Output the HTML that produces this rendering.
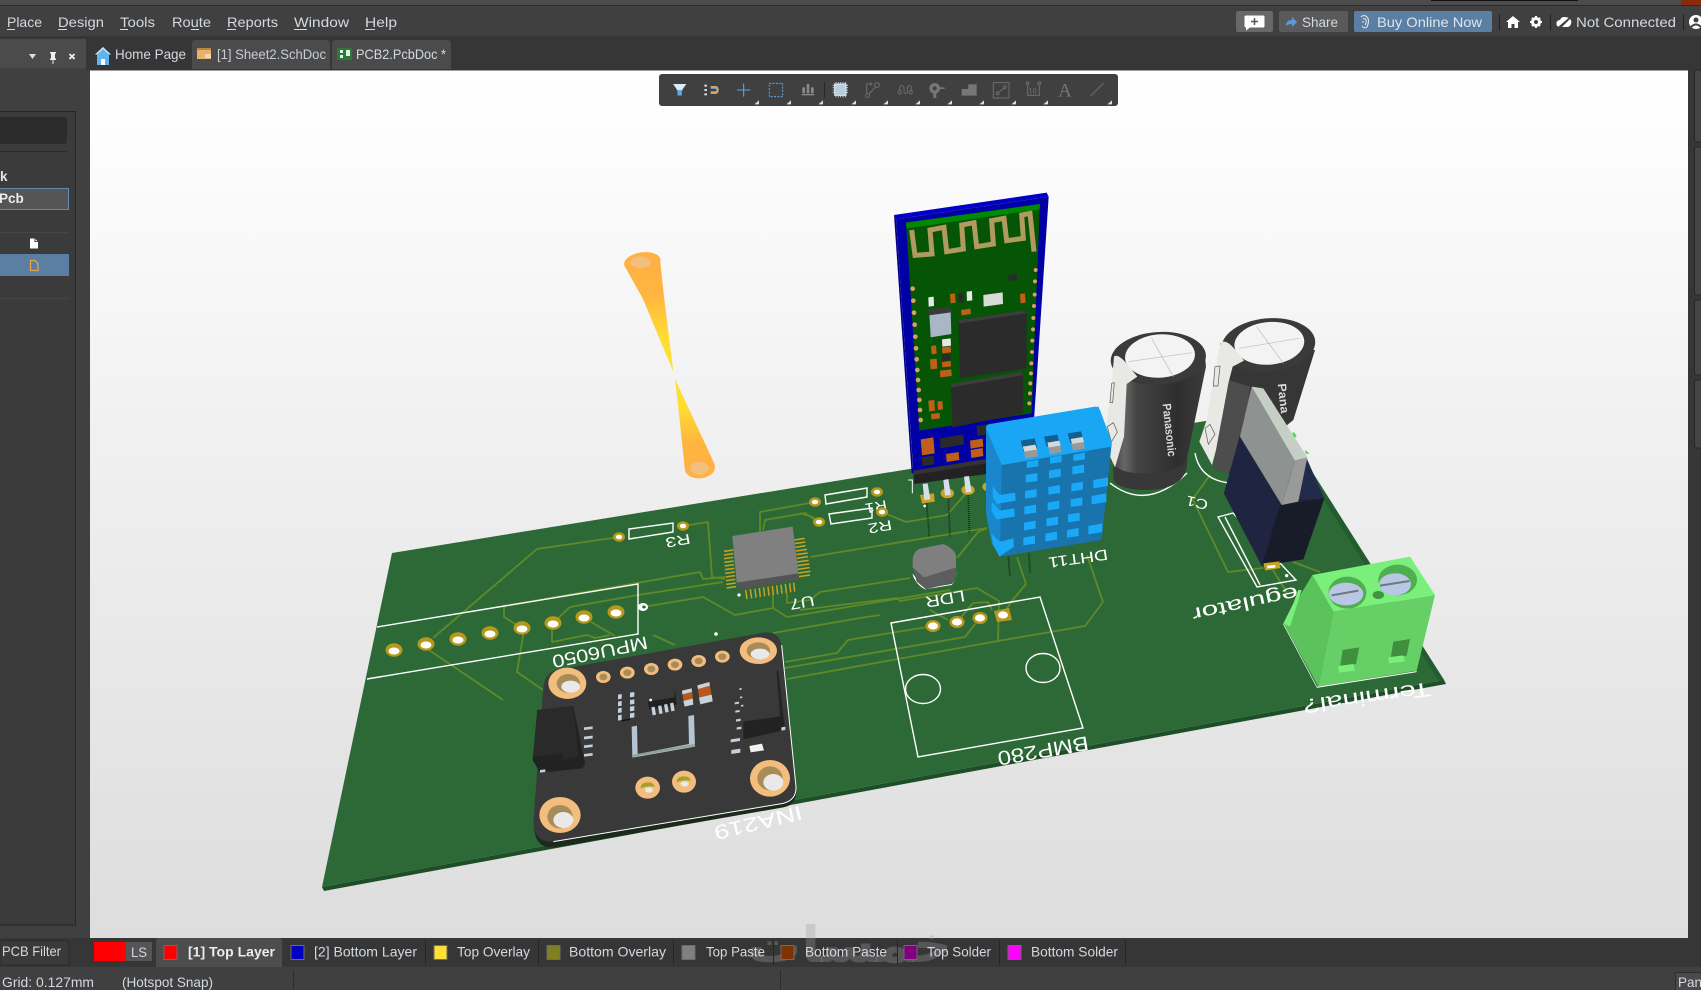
<!DOCTYPE html>
<html><head><meta charset="utf-8"><title>PCB2.PcbDoc</title>
<style>
html,body{margin:0;padding:0;width:1701px;height:990px;overflow:hidden;background:#3a3a3a}
svg{display:block}
text{font-family:"Liberation Sans",sans-serif}
.m{font-size:14px;fill:#d3d9e0}
.s{font-family:"Liberation Sans",sans-serif;fill:#fff}
.t{fill:none;stroke:#5f8a28;stroke-width:1.8;stroke-linejoin:round}
.w{fill:none;stroke:#fff;stroke-width:1.4}
</style></head><body>
<svg width="1701" height="990" viewBox="0 0 1701 990" xmlns="http://www.w3.org/2000/svg">
<defs>
<linearGradient id="bg" x1="0" y1="0" x2="0" y2="1"><stop offset="0" stop-color="#fff"/><stop offset=".05" stop-color="#fefefe"/><stop offset=".4" stop-color="#f1f1f1"/><stop offset="1" stop-color="#dddddd"/></linearGradient>
<linearGradient id="cone1" x1="0" y1="0" x2="0" y2="1"><stop offset="0" stop-color="#ffb145"/><stop offset=".32" stop-color="#ffb540"/><stop offset=".7" stop-color="#ffdd33"/><stop offset="1" stop-color="#ffe033"/></linearGradient>
<linearGradient id="cone2" x1="0" y1="1" x2="0" y2="0"><stop offset="0" stop-color="#ffb145"/><stop offset=".3" stop-color="#ffb540"/><stop offset=".7" stop-color="#ffdd33"/><stop offset="1" stop-color="#ffe033"/></linearGradient>
<linearGradient id="capb" x1="0" y1="0" x2="1" y2="0"><stop offset="0" stop-color="#3a3a3a"/><stop offset=".15" stop-color="#666"/><stop offset=".28" stop-color="#444"/><stop offset=".7" stop-color="#2e2e2e"/><stop offset="1" stop-color="#3c3c3c"/></linearGradient>
</defs>

<!-- chrome -->
<rect width="1701" height="990" fill="#3d3d3d"/>
<rect width="1701" height="5" fill="#4c4c4c"/>
<rect y="5" width="1701" height="1" fill="#2a2a2a"/>
<rect x="1431" y="0" width="147" height="1" fill="#111"/>
<rect x="1681" y="0" width="20" height="5" fill="#8a2a0a"/>
<rect y="6" width="1701" height="30" fill="#404040"/>
<rect y="36" width="1701" height="34" fill="#363636"/>

<text class="m" x="7" y="27" lengthAdjust="spacingAndGlyphs" textLength="35">Place</text>
<text class="m" x="58" y="27" lengthAdjust="spacingAndGlyphs" textLength="46">Design</text>
<text class="m" x="120" y="27" lengthAdjust="spacingAndGlyphs" textLength="35">Tools</text>
<text class="m" x="172" y="27" lengthAdjust="spacingAndGlyphs" textLength="39">Route</text>
<text class="m" x="227" y="27" lengthAdjust="spacingAndGlyphs" textLength="51">Reports</text>
<text class="m" x="294" y="27" lengthAdjust="spacingAndGlyphs" textLength="55">Window</text>
<text class="m" x="365" y="27" lengthAdjust="spacingAndGlyphs" textLength="32">Help</text>
<g stroke="#d3d9e0" stroke-width="1">
<path d="M7 29.500h8M58 29.500h9M120 29.500h8M191 29.500h8M227 29.500h9M294 29.500h13M365 29.500h10"/>
</g>

<!-- top right -->
<rect x="1236" y="11" width="37" height="21" rx="2" fill="#686868"/>
<path d="M1246 15.500h17a1.500 1.500 0 0 1 1.500 1.500v9a1.500 1.500 0 0 1-1.500 1.500h-13l-4 3v-3a1.500 1.500 0 0 1-1.500-1.500v-9a1.500 1.500 0 0 1 1.500-1.500z" fill="#fff"/>
<path d="M1254.500 18v7M1251 21.500h7" stroke="#555" stroke-width="1.500"/>
<rect x="1279" y="11" width="69" height="21" rx="2" fill="#5a5a5a"/>
<path d="M1286 26q0-6 6-6v-3l5 5-5 5v-3q-4 0-6 2z" fill="#5b9ad5"/>
<text class="m" x="1302" y="27" lengthAdjust="spacingAndGlyphs" textLength="36">Share</text>
<rect x="1354" y="11" width="138" height="21" rx="2" fill="#5b7fa3"/>
<path d="M1361 17q3-3 6 0t0 10q-3 2-5-1M1363 19q2-1 3 1t-1 5M1362 22h2" stroke="#e4ebf2" fill="none" stroke-width="1"/>
<text class="m" x="1377" y="27" lengthAdjust="spacingAndGlyphs" textLength="105" style="fill:#dbe5ef">Buy Online Now</text>
<rect x="1499" y="14" width="1" height="16" fill="#222"/>
<path d="M1513 16l7 6h-2v6h-3.500v-4h-3v4H1508v-6h-2z" fill="#fff"/>
<circle cx="1536" cy="22" r="3.500" fill="none" stroke="#fff" stroke-width="3"/>
<path d="M1536 16v2M1536 26v2M1530 22h2M1540 22h2M1532 18l1.500 1.500M1538.500 24.500l1.500 1.500M1540 18l-1.500 1.500M1533.500 24.500l-1.500 1.500" stroke="#fff" stroke-width="2"/>
<rect x="1550" y="14" width="1" height="16" fill="#222"/>
<path d="M1559 27q-3-1-2.500-4t3.500-3q1-3 4-3t5 1l-9 9zM1570 19q2 2 1 5t-4 3h-5z" fill="#fff"/>
<path d="M1557 29l15-13" stroke="#404040" stroke-width="1.500"/>
<text class="m" x="1576" y="27" lengthAdjust="spacingAndGlyphs" textLength="100">Not Connected</text>
<rect x="1683" y="14" width="1" height="16" fill="#222"/>
<circle cx="1696" cy="22" r="7" fill="#fff"/>
<circle cx="1696" cy="20" r="2.500" fill="#404040"/>
<path d="M1691 27q5-5 10 0" stroke="#404040" fill="none" stroke-width="2"/>

<!-- tabs -->
<path d="M103 47l-8 7.500h2V65h4v-6h4v6h4V54.500h2z" fill="#5fb4ee"/>
<path d="M103 47l-8 7.500h2l6-5.500 6 5.500h2z" fill="#cfe6f7"/>
<rect x="101" y="59" width="4" height="6" fill="#fff"/>
<text class="m" x="115" y="59" lengthAdjust="spacingAndGlyphs" textLength="71">Home Page</text>
<path d="M192 69V43a3 3 0 0 1 3-3h132a3 3 0 0 1 3 3v26z" fill="#4b4b4b"/>
<rect x="197" y="48" width="14" height="11" fill="#e8b16c"/>
<rect x="197" y="48" width="14" height="2" fill="#b98646"/>
<path d="M205 55h6M205 57h6" stroke="#fff" stroke-width="1"/>
<text class="m" x="217" y="59" lengthAdjust="spacingAndGlyphs" textLength="109" style="fill:#c7ced6">[1] Sheet2.SchDoc</text>
<path d="M332 69V43a3 3 0 0 1 3-3h113a3 3 0 0 1 3 3v26z" fill="#4b4b4b"/>
<rect x="337" y="48" width="15" height="12" fill="#2c7a38"/>
<path d="M340 50h3v3h-3zM340 55h3v3h-3zM346 50h4v6h-4z" fill="#e6efe6"/>
<text class="m" x="356" y="59" lengthAdjust="spacingAndGlyphs" textLength="90">PCB2.PcbDoc *</text>

<!-- left panel -->
<rect x="0" y="39" width="86" height="29" fill="#4b4b4b"/>
<rect x="0" y="68" width="90" height="870" fill="#404040"/>
<rect x="86" y="39" width="4" height="31" fill="#363636"/>
<path d="M29 54h7l-3.500 5z" fill="#ddd"/>
<path d="M50 52h6v1l-1 1v4l1 1v1h-2.500v4h-1v-4H50v-1l1-1v-4l-1-1z" fill="#eee"/>
<path d="M69.500 54l5 5M74.500 54l-5 5" stroke="#eee" stroke-width="1.800"/>
<rect x="0" y="111" width="76" height="814" fill="#3b3b3b"/>
<path d="M0 111.500h75.500V925H0" fill="none" stroke="#262626"/>
<rect x="-3" y="117" width="70" height="27" rx="3" fill="#2c2c2c"/>
<rect x="0" y="151" width="67" height="1" fill="#2a2a2a"/>
<text x="0" y="181" font-size="13.500" font-weight="bold" fill="#e6e6e6">k</text>
<rect x="-4" y="188.500" width="72.500" height="21" fill="#555" stroke="#5f8cb3"/>
<text x="-1" y="203" font-size="13.500" font-weight="bold" fill="#ececec">Pcb</text>
<rect x="0" y="232" width="69" height="1" fill="#464646"/>
<path d="M30 238.500h5l3 3v7h-8z" fill="#fff"/>
<path d="M35 238.500v3h3" stroke="#444" fill="none"/>
<rect x="0" y="254" width="69" height="22" fill="#5b7fa3"/>
<path d="M30.500 260.500h4.500l3 3v7h-7.500z" fill="none" stroke="#e8a24a" stroke-width="1.300"/>
<rect x="0" y="298" width="69" height="1" fill="#464646"/>

<!-- right strip -->
<rect x="1688" y="36" width="13" height="902" fill="#363636"/>
<g fill="#454545" stroke="#262626">
<rect x="1694.500" y="70" width="12" height="72" rx="2"/>
<rect x="1694.500" y="147" width="12" height="148" rx="2"/>
<rect x="1694.500" y="300" width="12" height="75" rx="2"/>
<rect x="1694.500" y="380" width="12" height="68" rx="2"/>
</g>

<!-- canvas -->
<rect x="90" y="70.500" width="1598" height="868" fill="url(#bg)"/>

<!-- antenna cones -->
<g transform="translate(600,230) scale(.33333)">
<path d="M72 105L180 88 192 200 220 425 128 205z" fill="url(#cone1)"/>
<path d="M225 447L345 705 255 722 238 560z" fill="url(#cone2)"/>
<ellipse cx="127" cy="96" rx="55" ry="29" fill="#ffb145" transform="rotate(-8 127 96)"/>
<ellipse cx="122" cy="97" rx="30" ry="17" fill="#f2c07e"/>
<ellipse cx="300" cy="715" rx="45" ry="30" fill="#ffb145" transform="rotate(-6 300 715)"/>
<ellipse cx="298" cy="715" rx="28" ry="19" fill="#f2c07e"/>
</g>

<!-- board -->
<path d="M322 887L1444 680 1446 684 324 891z" fill="#1e4e28"/>
<path d="M392 553L1273 410 1444 680 322 887z" fill="#2c6936"/>
<path d="M1273 410L1444 680 1439 681 1268 412z" fill="#235c2e"/>

<!-- traces -->
<g class="t">
<path d="M619 537L537 549 433 638"/>
<path d="M426 648L503 700"/>
<path d="M522 628L504 617 504 606 700 572 703 579 725 577"/>
<path d="M683 526L708 522 712 577 725 579"/>
<path d="M553 623L570 607 638 595 723 582"/>
<path d="M643 607L703 597 735 615 773 608 787 617 860 605 950 590"/>
<path d="M773 593V608"/>
<path d="M787 593V603L810 600 820 592 910 578"/>
<path d="M552 623V642L587 635 595 638 610 635"/>
<path d="M653 635L675 645M591 622L615 636M524 630L517 672 543 690"/>
<path d="M810 557L987 528"/>
<path d="M760 532V512L810 503M763 530L765 520 805 513 818 522"/>
<path d="M800 513L815 518"/>
<path d="M773 633L860 618 880 615"/>
<path d="M785 662L837 653 848 640 927 627"/>
<path d="M785 668L965 637 980 618"/>
<path d="M787 679L998 641 1085 626 1103 602 1087 555"/>
<path d="M882 512L906 522 947 515 968 491"/>
<path d="M957 558L978 532 987 528"/>
<path d="M1017 557L1026 584 1011 602 1003 615"/>
<path d="M800 610L897 598 900 601 977 588 999 601 998 641"/>
<path d="M930 610L948 620"/>
<path d="M957 622L973 603 988 602 992 610"/>
<path d="M1193 500L1228 572 1263 568M1210 475L1192 500M1293 562L1320 572M1273 570L1287 593"/>
</g>

<!-- silk -->
<g class="w">
<path d="M377 627L638 584V634L367 679"/>
<path d="M629 529L673 523V532L629 539z"/>
<path d="M825 495L867 488V497L826 504z"/>
<path d="M829 514L872 508V518L831 524z"/>
<path d="M891 623L1040 597 1083 728 918 757z"/>
<ellipse cx="923" cy="689" rx="17.500" ry="14.500"/>
<ellipse cx="1043" cy="668" rx="17" ry="14.500"/>
<path d="M1218 517L1233 513 1296 580 1257 587zM1225 517L1260 585"/>
<path d="M1110 483Q1147 512 1187 473"/>
<path d="M1195 453Q1200 480 1230 483"/>
</g>

<!-- silk text -->
<g class="s" text-anchor="middle" dominant-baseline="central">
<text transform="translate(678,541) rotate(170)" font-size="14" lengthAdjust="spacingAndGlyphs" textLength="25">R3</text>
<text transform="translate(876,507) rotate(170)" font-size="14" lengthAdjust="spacingAndGlyphs" textLength="22">R1</text>
<text transform="translate(880,527) rotate(170)" font-size="14" lengthAdjust="spacingAndGlyphs" textLength="24">R2</text>
<text transform="translate(802,602) rotate(170)" font-size="15" lengthAdjust="spacingAndGlyphs" textLength="25">U7</text>
<text transform="translate(600,652) rotate(168.300)" font-size="18" lengthAdjust="spacingAndGlyphs" textLength="97">MPU6050</text>
<text transform="translate(945,598) rotate(170)" font-size="16" lengthAdjust="spacingAndGlyphs" textLength="40">LDR</text>
<text transform="translate(1078,558) rotate(172)" font-size="15" lengthAdjust="spacingAndGlyphs" textLength="60">DHT11</text>
<text transform="translate(1197,503) rotate(193)" font-size="14" lengthAdjust="spacingAndGlyphs" textLength="22">C1</text>
<text transform="translate(1245,603) rotate(168)" font-size="19" lengthAdjust="spacingAndGlyphs" textLength="108">egulator</text>
<text transform="translate(1367,697) rotate(172)" font-size="20" lengthAdjust="spacingAndGlyphs" textLength="128">Terminal?</text>
<text transform="translate(1043,750) rotate(170)" font-size="20" lengthAdjust="spacingAndGlyphs" textLength="92">BMP280</text>
<text transform="translate(758,822) rotate(166.500)" font-size="20" lengthAdjust="spacingAndGlyphs" textLength="90">INA219</text>
</g>

<!-- pads -->
<g>
<g fill="#b8981c">
<ellipse cx="394" cy="650" rx="8.500" ry="6.800"/><ellipse cx="426" cy="644" rx="8.500" ry="6.800"/><ellipse cx="458" cy="639" rx="8.500" ry="6.800"/><ellipse cx="490" cy="633" rx="8.500" ry="6.800"/><ellipse cx="522" cy="628" rx="8.500" ry="6.800"/><ellipse cx="553" cy="623" rx="8.500" ry="6.800"/><ellipse cx="584" cy="617" rx="8.500" ry="6.800"/><ellipse cx="616" cy="612" rx="8.500" ry="6.800"/>
<ellipse cx="619" cy="537" rx="6" ry="4.800"/><ellipse cx="683" cy="526" rx="6" ry="4.800"/><ellipse cx="815" cy="502" rx="6" ry="4.800"/><ellipse cx="877" cy="492" rx="6" ry="4.800"/><ellipse cx="819" cy="522" rx="6" ry="4.800"/><ellipse cx="882" cy="512" rx="6" ry="4.800"/>
<ellipse cx="933" cy="626" rx="7.500" ry="6"/><ellipse cx="957" cy="622" rx="7.500" ry="6"/><ellipse cx="980" cy="618" rx="7.500" ry="6"/>
<path d="M994 611L1009 608 1012 620 997 622z"/>
</g>
<g fill="#fff">
<ellipse cx="394" cy="651" rx="5.500" ry="3.500"/><ellipse cx="426" cy="645" rx="5.500" ry="3.500"/><ellipse cx="458" cy="640" rx="5.500" ry="3.500"/><ellipse cx="490" cy="634" rx="5.500" ry="3.500"/><ellipse cx="522" cy="629" rx="5.500" ry="3.500"/><ellipse cx="553" cy="624" rx="5.500" ry="3.500"/><ellipse cx="584" cy="618" rx="5.500" ry="3.500"/><ellipse cx="616" cy="613" rx="5.500" ry="3.500"/>
<ellipse cx="619" cy="537" rx="3.200" ry="2.300"/><ellipse cx="683" cy="526" rx="3.200" ry="2.300"/><ellipse cx="815" cy="502" rx="3.200" ry="2.300"/><ellipse cx="877" cy="492" rx="3.200" ry="2.300"/><ellipse cx="819" cy="522" rx="3.200" ry="2.300"/><ellipse cx="882" cy="512" rx="3.200" ry="2.300"/>
<ellipse cx="933" cy="626" rx="5" ry="3.600"/><ellipse cx="957" cy="622" rx="5" ry="3.600"/><ellipse cx="980" cy="618" rx="5" ry="3.600"/><ellipse cx="1003" cy="615" rx="5" ry="3.600"/>
<ellipse cx="643" cy="607" rx="5" ry="4"/><circle cx="716" cy="634" r="1.800"/>
</g>
<ellipse cx="644" cy="607" rx="1.800" ry="1.500" fill="#2c6936"/>
</g>

<!-- U7 -->
<g transform="translate(360,480) scale(.33333)">
<g stroke="#c9a227" stroke-width="4.500" fill="none">
<path d="M1092 214l28-4M1092 225l28-4M1092 236l28-4M1093 247l28-4M1094 258l28-4M1095 269l28-4M1096 280l28-4M1097 291l28-4M1098 302l28-4M1099 313l28-4M1100 324l28-4"/>
<path d="M1303 180l31-5M1305 191l31-5M1306 202l31-5M1308 213l33-5M1309 224l34-5M1310 235l34-5M1311 246l35-5M1312 257l36-5M1313 268l36-5M1315 279l36-5M1316 290l34-5"/>
<path d="M1157 330l4 27M1171 328l4 27M1185 326l3 27M1198 324l3 27M1211 322l3 27M1224 320l3 27M1237 318l3 27M1250 316l3 27M1263 314l3 27M1276 312l3 27M1289 310l3 27M1301 308l3 27"/>
</g>
<path d="M1130 308L1315 280 1318 298 1132 332z" fill="#545454"/>
<path d="M1117 168L1298 140 1315 280 1130 308z" fill="#808080"/>
<circle cx="1137" cy="345" r="5" fill="#fff"/>
</g>

<!-- LDR -->
<g transform="translate(800,480) scale(.33333)">
<path d="M337 280Q345 312 375 328L455 315Q472 295 473 265Q470 300 455 312L375 326Z" fill="#fff"/>
<path d="M338 262V240Q340 210 365 205L430 192Q460 205 468 225V285L458 308 378 328 350 305Z" fill="#5d5d5d"/>
<path d="M338 262V240Q340 210 365 205L430 192Q460 205 468 225V262L372 292Z" fill="#7f7f7f"/>
</g>

<!-- INA219 -->
<g transform="translate(510,620) scale(.33333)">
<path d="M100 210Q105 165 140 155L760 45Q805 38 815 80L860 510Q860 555 820 562L135 682Q78 688 72 625Z" fill="#1c2a1c"/>
<path d="M100 200Q105 160 140 150L760 38Q805 32 815 75L858 500Q860 540 820 550L130 665Q75 670 70 610Z" fill="#393939"/>
<path d="M815 75L858 500Q860 540 820 550L130 665" fill="none" stroke="#fff" stroke-width="3"/>
<g fill="#f2bd7d">
<ellipse cx="172" cy="190" rx="57" ry="47"/><ellipse cx="745" cy="92" rx="56" ry="40"/><ellipse cx="780" cy="475" rx="60" ry="55"/><ellipse cx="150" cy="585" rx="62" ry="54"/>
<ellipse cx="280" cy="171" rx="22" ry="18"/><ellipse cx="352" cy="158" rx="22" ry="18"/><ellipse cx="424" cy="147" rx="22" ry="18"/><ellipse cx="495" cy="134" rx="22" ry="18"/><ellipse cx="566" cy="123" rx="22" ry="18"/><ellipse cx="637" cy="110" rx="22" ry="18"/>
<ellipse cx="413" cy="503" rx="37" ry="33"/><ellipse cx="522" cy="485" rx="36" ry="33"/>
</g>
<g fill="#a88c58">
<ellipse cx="280" cy="171" rx="12" ry="10"/><ellipse cx="352" cy="158" rx="12" ry="10"/><ellipse cx="424" cy="147" rx="12" ry="10"/><ellipse cx="495" cy="134" rx="12" ry="10"/><ellipse cx="566" cy="123" rx="12" ry="10"/><ellipse cx="637" cy="110" rx="12" ry="10"/>
<ellipse cx="175" cy="190" rx="35" ry="28"/><ellipse cx="745" cy="92" rx="35" ry="25"/><ellipse cx="780" cy="475" rx="38" ry="36"/><ellipse cx="150" cy="590" rx="38" ry="35"/>
</g>
<g fill="#e9e9e9">
<ellipse cx="182" cy="200" rx="28" ry="18"/><ellipse cx="750" cy="102" rx="28" ry="16"/><ellipse cx="790" cy="487" rx="30" ry="25"/><ellipse cx="160" cy="600" rx="30" ry="24"/>
<ellipse cx="417" cy="510" rx="12" ry="8"/><ellipse cx="524" cy="492" rx="12" ry="8"/>
</g>
<g fill="#a3a127"><path d="M392 505q0-18 22-18 18 0 20 14-15-6-42 4z"/><path d="M500 487q0-18 22-18 18 0 20 14-15-6-42 4z"/></g>
<path d="M82 270L190 258 225 430 218 445 90 458 68 420z" fill="#222"/>
<path d="M82 270L190 258 205 410 160 420 155 400 70 412z" fill="#2a2a2a"/>
<g fill="#c6d0dc"><path d="M222 322l26-3v8l-26 3zM222 350l26-3v8l-26 3zM222 376l26-3v8l-26 3zM222 402l26-3v8l-26 3z"/><path d="M90 450l16-2v8l-16 2z"/></g>
<path d="M700 305L820 288 826 330 700 358z" fill="#222"/>
<path d="M805 150L820 290 810 290 800 155z" fill="#242424"/>
<g fill="#c6d0dc"><path d="M662 358l28-4v9l-28 4zM664 390l27-4v12l-27 4zM680 322l14-2v7l-14 2zM678 298l14-2v7l-14 2zM676 272l13-2v6l-13 2zM674 247l13-2v6l-13 2zM688 205l7-1v5l-7 1zM690 230l7-1v5l-7 1zM693 255l7-1v5l-7 1zM814 322l12-2v10l-12 2z"/></g>
<path d="M718 378l38-7 6 20-40 6z" fill="#f1f1f1"/>
<path d="M413 245L495 232 500 255 418 268z" fill="#202020"/>
<path d="M495 205L500 255 492 255z" fill="#202020"/>
<g fill="#c6d0dc"><path d="M424 262l10-2 4 24-10 2zM444 258l10-2 4 24-10 2zM462 254l10-2 4 24-10 2zM480 250l10-2 4 24-10 2z"/>
<path d="M324 224l11-2v14l-11 2zM324 245l11-2v14l-11 2zM324 265l11-2v14l-11 2zM324 286l11-2v16l-11 2zM360 218l13-2v14l-13 2zM360 240l13-2v14l-13 2zM360 260l13-2v14l-13 2zM360 280l13-2v14l-13 2z"/></g>
<path d="M335 302l25-4" stroke="#111" stroke-width="4"/>
<circle cx="422" cy="240" r="4" fill="#fff"/>
<path d="M516 212L545 205 550 245 522 252z" fill="#b8581a"/>
<path d="M516 212L545 205 546 216 517 223z M520 243l28-7 2 18-26 6z" fill="#c8d2da"/>
<path d="M562 196L598 186 607 240 570 248z" fill="#b8581a"/>
<path d="M562 196L598 186 600 197 564 207zM567 233l38-9 3 20-37 9z" fill="#c8d2da"/>
<path d="M365 320l16-3 2 85 154-30-2-84 17-3 3 95-188 33z" fill="#b6c5d3"/>
<path d="M365 405l188-33 3 6-188 33z" fill="#92a098"/>
</g>

<!-- Bluetooth module -->
<g transform="translate(880,180) scale(.33333)">
<path d="M42 105L500 38 506 50 48 118z" fill="#0000c8"/>
<path d="M42 105L48 118 100 880 95 880z" fill="#00008a"/>
<path d="M48 118L506 50 462 720 320 840 100 875z" fill="#0000a4"/>
<path d="M78 128L480 72 455 700 118 752z" fill="#065406"/>
<path d="M78 128L480 72 478 88 80 145z" fill="#008a00"/>
<path d="M462 215L450 100 425 105 430 175 380 182 372 115 335 122 340 192 290 200 282 128 245 135 250 207 200 215 192 142 150 150 156 222 105 226 95 150" fill="none" stroke="#b09a5f" stroke-width="15" stroke-linejoin="miter"/>
<g fill="#d9a066">
<circle cx="98" cy="326" r="7"/><circle cx="100" cy="362" r="7"/><circle cx="102" cy="398" r="7"/><circle cx="104" cy="434" r="7"/><circle cx="106" cy="470" r="7"/><circle cx="108" cy="505" r="7"/><circle cx="110" cy="538" r="7"/><circle cx="112" cy="570" r="7"/><circle cx="114" cy="600" r="7"/><circle cx="116" cy="630" r="7"/><circle cx="118" cy="660" r="7"/><circle cx="120" cy="690" r="7"/><circle cx="122" cy="720" r="7"/>
<circle cx="467" cy="270" r="6"/><circle cx="465" cy="304" r="6"/><circle cx="464" cy="344" r="6"/><circle cx="462" cy="378" r="6"/><circle cx="460" cy="414" r="6"/><circle cx="459" cy="448" r="6"/><circle cx="457" cy="482" r="6"/><circle cx="456" cy="516" r="6"/><circle cx="454" cy="550" r="6"/><circle cx="453" cy="580" r="6"/><circle cx="451" cy="610" r="6"/><circle cx="450" cy="640" r="6"/><circle cx="448" cy="670" r="6"/>
</g>
<path d="M235 420L440 392 440 565 240 595z" fill="#2b2b2b"/>
<path d="M212 612L430 575 430 700 218 742z" fill="#2b2b2b"/>
<path d="M235 420L430 392 440 400 238 430zM212 612L425 575 432 585 215 622z" fill="#3d3d3d"/>
<path d="M148 400L212 392 214 462 152 472z" fill="#a8b6c6"/>
<path d="M144 388L210 380 212 397 146 406z" fill="#3a3a3a"/>
<path d="M186 478l26-3 1 22-26 3z" fill="#e8e8e8"/>
<path d="M310 345l58-8 1 35-58 8z" fill="#d8dcd8"/>
<path d="M145 352l16-2 1 28-16 2zM260 335l16-2 1 28-16 2z" fill="#e8e8e8"/>
<path d="M235 340l15-2 1 28-15 2zM385 285l26-4 1 18-26 4zM186 525l26-3 1 18-26 3z" fill="#2a2a2a"/>
<g fill="#c06018">
<path d="M210 342l15-2 2 28-15 2zM420 342l15-2 2 28-15 2zM243 390l28-4 2 16-28 4zM153 498l15-2 2 25-15 2zM186 502l26-3 1 18-26 3zM150 538l20-2 2 30-20 2zM186 546l26-3 1 16-26 3zM180 572l34-4 1 20-34 4zM145 662l18-2 2 32-18 2zM172 665l15-2 2 25-15 2zM153 702l26-3 1 16-26 3z"/>
<path d="M122 778l38-6 2 24-38 6zM124 802l38-6 2 24-38 6zM270 782l38-6 2 24-38 6zM272 810l36-6 2 24-36 6zM198 822l38-6 2 24-38 6z"/>
</g>
<path d="M180 775l70-12 2 30-70 12zM125 832l36-5 2 26-36 5zM290 738l35-6 2 30-35 6z" fill="#2a2a2a"/>
<path d="M100 872L330 835 335 880 103 912z" fill="#222"/>
<path d="M100 872L330 835 332 848 102 885z" fill="#333"/>
<path d="M85 900h12v40" fill="none" stroke="#fff" stroke-width="3"/>
<g stroke="#222" stroke-width="5" stroke-dasharray="3 3" fill="none">
<path d="M140 970L148 1070M205 955L210 1070M265 945L268 1060M385 1130L390 1190M447 1120L450 1180"/>
</g>
<path d="M120 945l42-5 2 25-38 6z" fill="#c9a227"/>
<ellipse cx="202" cy="940" rx="20" ry="15" fill="#c9a227"/>
<ellipse cx="264" cy="930" rx="20" ry="15" fill="#c9a227"/>
<ellipse cx="325" cy="920" rx="18" ry="14" fill="#c9a227"/>
<g fill="#d5deea">
<path d="M128 912l15-2 8 48-18 2z"/><path d="M190 900l15-3 8 48-18 2z"/><path d="M252 890l15-2 8 48-18 2z"/>
</g>
<circle cx="134" cy="978" r="4" fill="#fff"/>

<!-- capacitor C1 -->
<path d="M700 885Q690 930 810 930 920 925 922 845L920 800 700 830z" fill="#383838"/>
<path d="M705 525L690 700 690 830Q700 885 810 880 920 870 922 830L978 560 975 530z" fill="url(#capb)"/>
<ellipse cx="835" cy="535" rx="143" ry="79" transform="rotate(-4 835 535)" fill="#3a3a3a"/>
<ellipse cx="840" cy="528" rx="105" ry="65" transform="rotate(-4 840 528)" fill="#f3f3f3"/>
<path d="M745 545L935 518M815 475L880 590" stroke="#b5c0b5" stroke-width="2"/>
<path d="M702 530Q712 520 735 545L772 590 740 612 732 770 705 862 690 830 678 740Q695 620 702 530z" fill="#e8e8e4"/>
<path d="M695 610l8-2-5 60h-8zM682 740l18-12 12 28-18 30z" fill="none" stroke="#555" stroke-width="2"/>
<text transform="translate(868,750) rotate(84)" text-anchor="middle" dominant-baseline="central" font-size="36" font-weight="bold" fill="#d9d9d9" lengthAdjust="spacingAndGlyphs" textLength="160">Panasonic</text>

<!-- capacitor C2 -->
<path d="M1045 600L1010 810 1000 865 1045 880 1240 720 1305 510 1020 490z" fill="#363636"/>
<path d="M1045 600L1010 810 1000 865 1045 880 1090 790 1110 620z" fill="#4d4d4d"/>
<ellipse cx="1165" cy="495" rx="141" ry="80" transform="rotate(-5 1165 495)" fill="#3a3a3a"/>
<ellipse cx="1168" cy="490" rx="105" ry="64" transform="rotate(-5 1168 490)" fill="#f3f3f3"/>
<path d="M1078 505L1258 475M1130 440L1210 550" stroke="#b5c0b5" stroke-width="2"/>
<path d="M1022 490Q1035 475 1062 505L1092 542 1058 560 1045 610 1008 810 996 855 958 785 980 720 1000 600z" fill="#e8e8e4"/>
<path d="M1005 560l15-2-6 60h-14zM975 745l15-12 15 30-20 30z" fill="none" stroke="#555" stroke-width="2"/>
<text transform="translate(1210,655) rotate(84)" text-anchor="middle" dominant-baseline="central" font-size="36" font-weight="bold" fill="#d9d9d9" lengthAdjust="spacingAndGlyphs" textLength="90">Pana</text>

<!-- DHT11 -->
<path d="M318 745L655 680 695 790 665 1080 360 1130 318 1000z" fill="#1974ae"/>
<path d="M318 745Q316 735 330 732L645 680Q655 680 660 690L695 785 695 800 365 855 318 770z" fill="#19a6f5"/>
<path d="M318 745L365 855 360 1130 335 1090 318 1000z" fill="#1a86cc"/>
<g fill="#125e90">
<path d="M422 782l42-7 8 30-42 8zM492 770l40-6 8 28-40 7zM563 760l40-6 8 28-40 7z"/>
</g>
<g fill="#d7d7d7"><path d="M428 800l38-6 5 15-38 6zM502 788l36-6 4 15-36 6zM572 777l36-6 4 15-36 6z"/></g>
<g fill="#999"><path d="M433 815l38-6 2 20-38 6zM506 803l36-6 2 20-36 6zM576 792l36-6 2 20-36 6z"/></g>
<g fill="#1aa8f8">
<path d="M440 845l35-6v20l-35 5zM510 832l35-6v20l-35 5zM580 824l35-6v20l-35 5z"/>
<path d="M437 885l35-6v24l-35 5zM507 872l35-6v24l-35 5zM577 860l35-6v24l-35 5z"/>
<path d="M435 933l35-6v24l-35 5zM505 921l35-6v24l-35 5zM574 911l35-6v24l-35 5zM640 900l44-8v26l-44 7z"/>
<path d="M433 980l35-6v24l-35 5zM503 968l35-6v24l-35 5zM572 958l35-6v24l-35 5zM635 948l44-8v26l-44 7z"/>
<path d="M432 1028l35-6v24l-35 5zM499 1016l35-6v24l-35 5zM564 1004l35-6v24l-35 5z"/>
<path d="M430 1073l35-6v24l-35 5zM496 1061l35-6v24l-35 5zM561 1050l35-6v24l-35 5zM625 1038l42-8v26l-42 7z"/>
<path d="M338 918L358 945 405 938 407 962 350 972 338 950z"/>
<path d="M335 965L360 992 403 985 404 1010 350 1018 335 995z"/>
<path d="M333 1060L360 1085 400 1075 402 1100 358 1130 340 1095z"/>
</g>
</g>

<!-- Regulator -->
<g transform="translate(1150,400) scale(.33333)">
<path d="M222 280L270 105 523 295 460 478 335 497z" fill="#1d2338"/>
<path d="M430 300L470 175 523 295z" fill="#232b4a"/>
<path d="M390 315L523 295 460 478 335 497z" fill="#181c28"/>
<path d="M222 280L270 105 390 315 335 497z" fill="#1f2540"/>
<path d="M340 490l48-6 3 20-45 8z" fill="#c9a227"/>
<path d="M352 497l24-2v8l-24 2z" fill="#fff"/>
<circle cx="410" cy="527" r="5" fill="#fff"/>
<path d="M430 95l10 12-6 8-8-10zM465 150l14 10-12 2z" fill="#3be83b"/>
</g>
<g transform="translate(880,180) scale(.33333)">
<path d="M1115 620L1080 770 1205 975 1245 840z" fill="#8e9392"/>
<path d="M1115 620L1150 625 1282 832 1245 842z" fill="#c6cfc6"/>
<path d="M1245 842L1282 832 1255 965 1205 975z" fill="#9a9a9a"/>
</g>

<!-- Terminal -->
<g transform="translate(1150,400) scale(.33333)">
<path d="M487 525L550 635 505 860 400 670z" fill="#5cc25c"/>
<path d="M550 635L855 585 800 812 505 860z" fill="#66d066"/>
<path d="M487 525L780 470 855 585 550 635z" fill="#7af07a"/>
<path d="M400 670L430 610 445 570 455 570 420 680z" fill="#7af07a"/>
<ellipse cx="592" cy="578" rx="57" ry="48" fill="#4fae4f"/>
<ellipse cx="743" cy="540" rx="58" ry="46" fill="#4fae4f"/>
<ellipse cx="588" cy="582" rx="52" ry="34" fill="#b9c6e4"/>
<ellipse cx="735" cy="553" rx="48" ry="33" fill="#b9c6e4"/>
<path d="M545 586L625 572M690 557L778 543" stroke="#6d7a78" stroke-width="6"/>
<ellipse cx="685" cy="585" rx="17" ry="12" fill="#3f953f"/>
<path d="M578 750l50-8-10 50-48 8zM730 725l50-8-10 50-48 8z" fill="#3f8f3f"/>
<path d="M565 798l45-6 5 20-48 6zM715 772l45-6 5 18-48 6z" fill="#7af07a"/>
<path d="M500 862L800 815" stroke="#fff" stroke-width="3"/>
<path d="M400 672L500 860" stroke="#fff" stroke-width="2"/>
</g>

<!-- toolbar -->
<rect x="659" y="74" width="459" height="32" rx="3" fill="#404040"/>
<g transform="translate(640,60) scale(.33333)">
<path d="M99 72h40l-14 20v14h-12V92z" fill="#d8ecfa"/>
<path d="M108 90h22l-5 3v13h-12V93z" fill="#5da9e6"/>
<path d="M212 78h14q10 0 10 12t-10 12h-14v-7h14q3 0 3-5t-3-5h-14z" fill="#e8a24a"/>
<path d="M212 85h14q4 0 4 5t-4 5h-14" fill="none" stroke="#5da9e6" stroke-width="3"/>
<rect x="193" y="74" width="8" height="6" fill="#cfd8e0"/><rect x="193" y="87" width="8" height="6" fill="#cfd8e0"/><rect x="193" y="100" width="8" height="6" fill="#cfd8e0"/>
<path d="M311 70v40M291 90h40" stroke="#5da9e6" stroke-width="3"/>
<rect x="388" y="70" width="40" height="40" fill="none" stroke="#5da9e6" stroke-width="3" stroke-dasharray="6 4"/>
<g fill="#8a8a8a"><rect x="487" y="82" width="8" height="18"/><rect x="500" y="72" width="8" height="28"/><rect x="513" y="82" width="8" height="18"/><rect x="485" y="102" width="38" height="4"/></g>
<rect x="552.500" y="67" width="2" height="46" fill="#1d1d1d"/>
<rect x="584" y="72" width="34" height="34" fill="#b5cddd" stroke="#e8eef2" stroke-width="3"/>
<path d="M588 66v6M595 66v6M602 66v6M609 66v6M616 66v6M588 106v6M595 106v6M602 106v6M609 106v6M616 106v6M578 76h6M578 83h6M578 90h6M578 97h6M618 76h6M618 83h6M618 90h6M618 97h6" stroke="#cfdbe3" stroke-width="2.500"/>
<g stroke="#6e6e6e" stroke-width="3" fill="none">
<circle cx="683" cy="107" r="6"/><circle cx="711" cy="75" r="7"/><path d="M687 102l20-22M680 100V72h16M690 68l6 4-6 4"/>
<circle cx="779" cy="97" r="5"/><circle cx="812" cy="97" r="5"/><path d="M779 92V85q1-8 7-8t6 8v10q1 5 5 5t5-5V85q1-8 6-8t6 8v8"/>
<rect x="1060" y="68" width="47" height="46"/><circle cx="1073" cy="100" r="4"/><circle cx="1095" cy="81" r="4"/><path d="M1076 97l16-13"/>
<circle cx="1163" cy="70" r="4"/><circle cx="1198" cy="70" r="4"/><path d="M1163 74v32h35V74"/>
<path d="M1352 108l39-39" stroke="#6b6b6b" stroke-width="3.500"/>
</g>
<circle cx="884" cy="85" r="16" fill="#777"/><circle cx="884" cy="85" r="6" fill="#404040"/>
<rect x="880" y="98" width="9" height="16" fill="#777"/>
<path d="M898 82h16v5h-16z" fill="#777"/>
<path d="M965 87h20V73h25v34h-45z" fill="#777"/>
<text x="1178" y="100" text-anchor="middle" style="font-family:'Liberation Serif',serif" font-size="24" fill="#777" lengthAdjust="spacingAndGlyphs" textLength="24">10</text>
<text x="1275" y="109" text-anchor="middle" style="font-family:'Liberation Serif',serif" font-size="56" fill="#777">A</text>
<g fill="#d9dfd9">
<path d="M357 121v12h-14zM453 121v12h-14zM549 121v12h-14zM648 121v12h-14zM744 121v12h-14zM840 121v12h-14zM936 121v12h-14zM1032 121v12h-14zM1128 121v12h-14zM1224 121v12h-14zM1416 121v12h-14z"/>
</g>
</g>

<!-- bottom tabs -->
<rect x="0" y="938" width="1701" height="29" fill="#363636"/>
<rect x="0" y="967" width="1701" height="23" fill="#404040"/>

<!-- watermark -->
<text x="747" y="962" style="font-family:'DejaVu Sans',sans-serif" font-size="50" font-weight="bold" fill="#a0a0a0" fill-opacity=".32" lengthAdjust="spacingAndGlyphs" textLength="205">خمسات</text>

<path d="M0 940.500h66a3 3 0 0 1 3 3V965H0z" fill="#3a3a3a" stroke="#2a2a2a"/>
<text class="m" x="2" y="956" lengthAdjust="spacingAndGlyphs" textLength="59">PCB Filter</text>
<rect x="94" y="942" width="32" height="19" fill="#ff0000"/>
<rect x="126" y="942" width="26" height="19" fill="#555"/>
<text class="m" x="131" y="957" lengthAdjust="spacingAndGlyphs" textLength="16">LS</text>
<path d="M156 967v-26a3 3 0 0 1 3-3h120a3 3 0 0 1 3 3v26z" fill="#4d4d4d"/>
<g stroke="#6c6c6c" stroke-width="1">
<rect x="164" y="945.500" width="13" height="14" fill="#ff0000"/>
<rect x="291" y="945.500" width="13" height="14" fill="#0000c0"/>
<rect x="434" y="945.500" width="13" height="14" fill="#ffe033"/>
<rect x="547" y="945.500" width="13" height="14" fill="#808020"/>
<rect x="682" y="945.500" width="13" height="14" fill="#808080"/>
<rect x="781" y="945.500" width="13" height="14" fill="#803300"/>
<rect x="904" y="945.500" width="13" height="14" fill="#800080"/>
<rect x="1008" y="945.500" width="13" height="14" fill="#ff00ff"/>
</g>
<g fill="#262626"><rect x="425" y="940" width="1" height="25"/><rect x="538" y="940" width="1" height="25"/><rect x="673" y="940" width="1" height="25"/><rect x="773" y="940" width="1" height="25"/><rect x="897" y="940" width="1" height="25"/><rect x="999" y="940" width="1" height="25"/><rect x="1125" y="940" width="1" height="25"/></g>
<text x="188" y="956.500" font-size="14" font-weight="bold" fill="#ececec" lengthAdjust="spacingAndGlyphs" textLength="87">[1] Top Layer</text>
<text class="m" x="314" y="956.500" lengthAdjust="spacingAndGlyphs" textLength="103">[2] Bottom Layer</text>
<text class="m" x="457" y="956.500" lengthAdjust="spacingAndGlyphs" textLength="73">Top Overlay</text>
<text class="m" x="569" y="956.500" lengthAdjust="spacingAndGlyphs" textLength="97">Bottom Overlay</text>
<text class="m" x="706" y="956.500" lengthAdjust="spacingAndGlyphs" textLength="59">Top Paste</text>
<text class="m" x="805" y="956.500" lengthAdjust="spacingAndGlyphs" textLength="82">Bottom Paste</text>
<text class="m" x="927" y="956.500" lengthAdjust="spacingAndGlyphs" textLength="64">Top Solder</text>
<text class="m" x="1031" y="956.500" lengthAdjust="spacingAndGlyphs" textLength="87">Bottom Solder</text>

<!-- status -->
<text class="m" x="2" y="987" lengthAdjust="spacingAndGlyphs" textLength="92">Grid: 0.127mm</text>
<text class="m" x="122" y="987" lengthAdjust="spacingAndGlyphs" textLength="91">(Hotspot Snap)</text>
<rect x="293" y="970" width="1" height="20" fill="#2c2c2c"/>
<rect x="780" y="970" width="1" height="20" fill="#2c2c2c"/>
<rect x="1675.500" y="972.500" width="30" height="20" rx="2" fill="#4b4b4b" stroke="#2c2c2c"/>
<text class="m" x="1678" y="987" lengthAdjust="spacingAndGlyphs" textLength="24">Pan</text>
</svg>
</body></html>
